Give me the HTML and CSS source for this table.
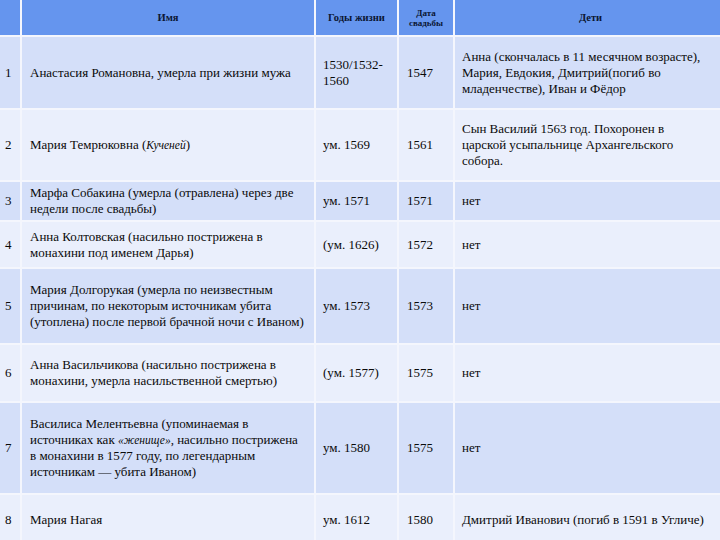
FILE: index.html
```html
<!DOCTYPE html>
<html>
<head>
<meta charset="utf-8">
<title>Жёны Ивана Грозного</title>
<link rel="stylesheet" href="styles.css">
</head>
<body class="page">
<table class="wives">
  <colgroup>
    <col class="c-num">
    <col class="c-name">
    <col class="c-years">
    <col class="c-wed">
    <col class="c-kids">
  </colgroup>
  <thead>
    <tr class="head">
      <th></th>
      <th>Имя</th>
      <th>Годы жизни</th>
      <th class="small">Дата свадьбы</th>
      <th>Дети</th>
    </tr>
  </thead>
  <tbody>
    <tr class="odd r1">
      <td class="num">1</td>
      <td>Анастасия Романовна, умерла при жизни мужа</td>
      <td>1530/1532-1560</td>
      <td>1547</td>
      <td>Анна (скончалась в 11 месячном возрасте), Мария, Евдокия, Дмитрий(погиб во младенчестве), Иван и Фёдор</td>
    </tr>
    <tr class="even r2">
      <td class="num">2</td>
      <td>Мария Темрюковна (<i>Кученей</i>)</td>
      <td>ум. 1569</td>
      <td>1561</td>
      <td>Сын Василий 1563 год. Похоронен в царской усыпальнице Архангельского собора.</td>
    </tr>
    <tr class="odd r3">
      <td class="num">3</td>
      <td>Марфа Собакина (умерла (отравлена) через две недели после свадьбы)</td>
      <td>ум. 1571</td>
      <td>1571</td>
      <td>нет</td>
    </tr>
    <tr class="even r4">
      <td class="num">4</td>
      <td>Анна Колтовская (насильно пострижена в монахини под именем Дарья)</td>
      <td>(ум. 1626)</td>
      <td>1572</td>
      <td>нет</td>
    </tr>
    <tr class="odd r5">
      <td class="num">5</td>
      <td>Мария Долгорукая (умерла по неизвестным причинам, по некоторым источникам убита (утоплена) после первой брачной ночи с Иваном)</td>
      <td>ум. 1573</td>
      <td>1573</td>
      <td>нет</td>
    </tr>
    <tr class="even r6">
      <td class="num">6</td>
      <td>Анна Васильчикова (насильно пострижена в монахини, умерла насильственной смертью)</td>
      <td>(ум. 1577)</td>
      <td>1575</td>
      <td>нет</td>
    </tr>
    <tr class="odd r7">
      <td class="num">7</td>
      <td>Василиса Мелентьевна (упоминаемая в источниках как <i>«женище»</i>, насильно пострижена в монахини в 1577 году, по легендарным источникам — убита Иваном)</td>
      <td>ум. 1580</td>
      <td>1575</td>
      <td>нет</td>
    </tr>
    <tr class="even r8">
      <td class="num">8</td>
      <td>Мария Нагая</td>
      <td>ум. 1612</td>
      <td>1580</td>
      <td>Дмитрий Иванович (погиб в 1591 в Угличе)</td>
    </tr>
  </tbody>
</table>
</body>
</html>
```

FILE: styles.css
```css
html, body {
  margin: 0;
  padding: 0;
  background: #f4f6fd;
  overflow: hidden;
}

.page {
  font-family: "Liberation Serif", "Times New Roman", serif;
}

.wives {
  table-layout: fixed;
  border-collapse: separate;
  border-spacing: 2px;
  margin: -2px 0 0 -2px;
  width: 726px;
  background: #f4f6fd;
  font-family: "Liberation Serif", "Times New Roman", serif;
  font-size: 13px;
  line-height: 16px;
  color: #0a0a0a;
}

.c-num { width: 20px; }
.c-name { width: 292px; }
.c-years { width: 81px; }
.c-wed { width: 54px; }
.c-kids { width: 271px; }

.wives th,
.wives td {
  padding: 0 8px 0 8px;
  vertical-align: middle;
  text-align: left;
  overflow: hidden;
}

.wives th {
  background: #6595ee;
  color: #0b1633;
  font-size: 10.5px;
  font-weight: bold;
  line-height: 11px;
  text-align: center;
  padding: 0 4px;
  height: 35px;
}

.wives th.small {
  font-size: 9px;
  line-height: 10px;
  padding: 0 2px;
}

.wives td.num {
  padding: 0 0 0 5px;
}

.wives td:nth-child(3) {
  padding-left: 7px;
  padding-right: 2px;
}

.wives td:nth-child(4) {
  padding-right: 2px;
}

.wives td:nth-child(5) {
  padding-left: 7px;
  padding-right: 20px;
}

.wives i {
  font-size: 11.5px;
}

.odd td { background: #d4dff9; }
.even td { background: #eaeffc; }

.r1 td { height: 71px; }
.r2 td { height: 70px; }
.r3 td { height: 38px; }
.r4 td { height: 45px; }
.r5 td { height: 74px; }
.r6 td { height: 56px; }
.r7 td { height: 90px; }
.r8 td { height: 50px; }
```
